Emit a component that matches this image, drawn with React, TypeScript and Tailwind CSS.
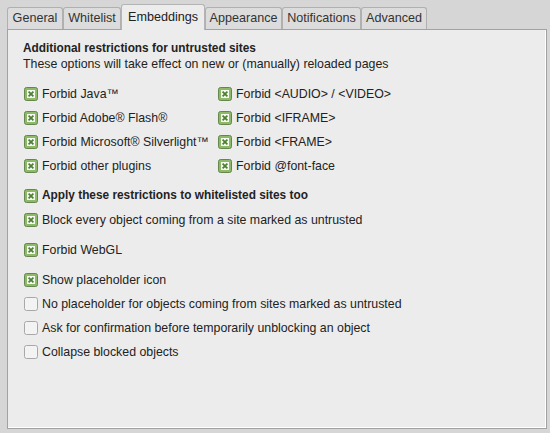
import React from 'react';

const tabs = [
    { label: 'General', w: 'w-[56px]' },
    { label: 'Whitelist', w: 'w-[58px]' },
    { label: 'Embeddings', w: 'w-[84px]' },
    { label: 'Appearance', w: 'w-[77px]' },
    { label: 'Notifications', w: 'w-[79px]' },
    { label: 'Advanced', w: 'w-[66px]' },
];

const Check: React.FC<{ checked?: boolean }> = ({ checked }) =>
    checked ? (
        <svg width="14" height="14" viewBox="0 0 14 14" className="shrink-0">
            <rect x="0.5" y="0.5" width="13" height="13" rx="2" fill="#8cba68" stroke="#66854f" />
            <rect x="3" y="3" width="8" height="8" fill="#f6f9f2" />
            <path d="M4.6 4.6 L9.4 9.4 M9.4 4.6 L4.6 9.4" stroke="#4f7f33" strokeWidth="1.8" />
        </svg>
    ) : (
        <svg width="14" height="14" viewBox="0 0 14 14" className="shrink-0">
            <rect x="0.5" y="0.5" width="13" height="13" rx="2" fill="#f3f3f3" stroke="#a8a8a8" />
        </svg>
    );

const Row: React.FC<{ label: string; checked?: boolean; bold?: boolean }> = ({ label, checked, bold }) => (
    <div className="flex items-center h-6 gap-[4px]">
        <Check checked={checked} />
        <span className={`text-[#222] whitespace-nowrap ${bold ? 'font-bold text-[11.85px]' : 'text-[12.35px]'}`}>{label}</span>
    </div>
);

export default function App() {
    return (
        <div
            className="w-[550px] h-[433px] bg-[#d6d6d6] px-[7px] pt-[4px] overflow-hidden"
            style={{ fontFamily: '"Liberation Sans", Arial, sans-serif' }}
        >
            <div className="flex items-end h-[25px] relative z-10">
                {tabs.map((t) => {
                    const active = t.label === 'Embeddings';
                    return (
                        <div
                            key={t.label}
                            className={`${t.w} border border-b-0 rounded-t-[3px] text-[12.6px] flex items-center justify-center ${
                                active
                                    ? 'h-[26px] bg-[#ececec] border-[#b4b4b4] text-[#222] -mb-px pb-px'
                                    : 'h-[22px] bg-[#dcdcdc] border-[#b0b0b0] text-[#333]'
                            }`}
                        >
                            {t.label}
                        </div>
                    );
                })}
            </div>
            <div className="w-[540px] h-[400px] bg-[#ececec] border border-[#a2a2a2] shadow-[inset_-1px_-1px_0_#ffffff] px-[16px] pt-[10px]">
                <div className="leading-4 text-[#222] -ml-px">
                    <div className="font-bold text-[11.85px]">Additional restrictions for untrusted sites</div>
                    <div className="text-[12.35px]">These options will take effect on new or (manually) reloaded pages</div>
                </div>
                <div className="grid grid-cols-[194px_1fr] mt-[10px]">
                    <Row label="Forbid Java™" checked />
                    <Row label="Forbid <AUDIO> / <VIDEO>" checked />
                    <Row label="Forbid Adobe® Flash®" checked />
                    <Row label="Forbid <IFRAME>" checked />
                    <Row label="Forbid Microsoft® Silverlight™" checked />
                    <Row label="Forbid <FRAME>" checked />
                    <Row label="Forbid other plugins" checked />
                    <Row label="Forbid @font-face" checked />
                </div>
                <div className="mt-[6px]">
                    <Row label="Apply these restrictions to whitelisted sites too" checked bold />
                    <Row label="Block every object coming from a site marked as untrusted" checked />
                </div>
                <div className="mt-[6px]">
                    <Row label="Forbid WebGL" checked />
                </div>
                <div className="mt-[6px]">
                    <Row label="Show placeholder icon" checked />
                    <Row label="No placeholder for objects coming from sites marked as untrusted" />
                    <Row label="Ask for confirmation before temporarily unblocking an object" />
                    <Row label="Collapse blocked objects" />
                </div>
            </div>
        </div>
    );
}
